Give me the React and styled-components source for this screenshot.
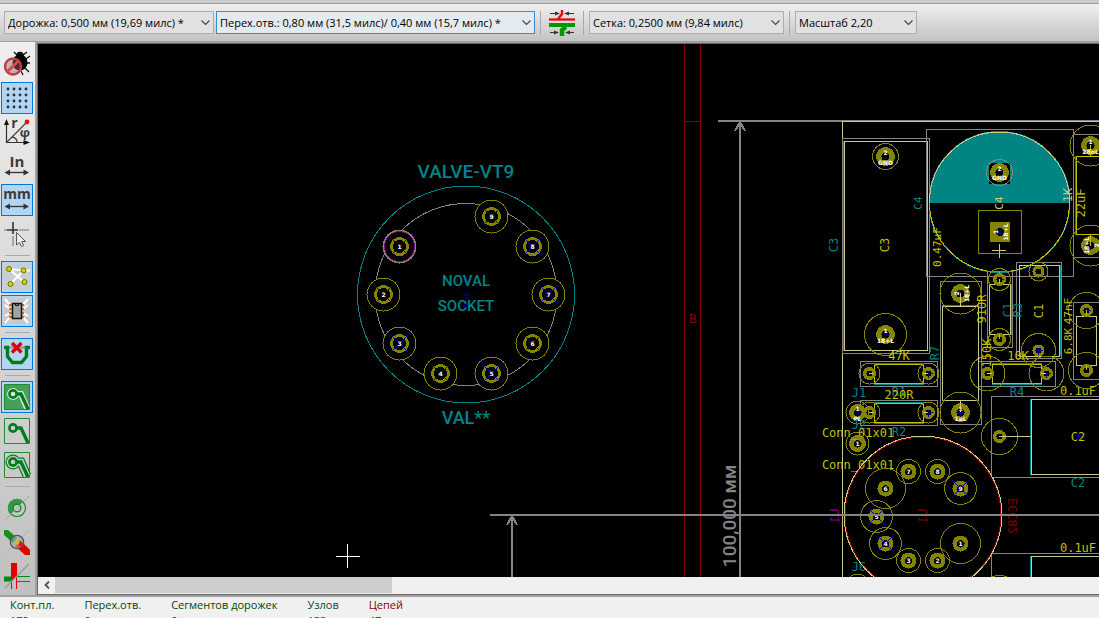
import React from 'react';
import styled, { createGlobalStyle } from 'styled-components';

const TEAL = '#008484';
const OLIVE = '#848400';
const YELLOW = '#c2c200';
const CREAM = '#c9c98a';
const GRAY = '#848484';
const RED = '#840000';
const BLUE = '#000084';
const MAGENTA = '#840084';

const GlobalStyle = createGlobalStyle`
  * {
    box-sizing: border-box;
  }
  body {
    margin: 0;
    overflow: hidden;
    background: #f0f0f0;
    color: #000;
    font-family: "Open Sans", "Noto Sans", sans-serif;
    font-size: 11px;
  }
`;

const Window = styled.div`
  display: flex;
  flex-direction: column;
  height: 100vh;
`;

const TopEdge = styled.div`
  flex: none;
  height: 4px;
  background: #cbcbcb;
  border-bottom: 1px solid #9c9c9c;
`;

const TopBar = styled.header`
  flex: none;
  display: flex;
  align-items: center;
  height: 38px;
  padding: 0 4px;
  background: linear-gradient(#f0f0f0, #c3c3c3);
  border-bottom: 1px solid #a0a0a0;
`;

const Field = styled.label`
  display: flex;
  position: relative;
  width: ${(p) => p.$width}px;
  margin-right: ${(p) => p.$gap || 0}px;
`;

const Select = styled.select`
  appearance: none;
  width: 100%;
  height: 23px;
  padding: 0 16px 0 3px;
  border: 1px solid ${(p) => (p.$active ? '#3c8ccc' : '#adadad')};
  border-radius: 0;
  background: ${(p) => (p.$active ? '#e3eaf0' : '#e1e1e1')};
  color: #000;
  font-family: inherit;
  font-size: 11px;
`;

const Chevron = styled.svg`
  position: absolute;
  right: 4px;
  top: 8px;
  width: 9px;
  height: 7px;
  pointer-events: none;
`;

const BarSeparator = styled.span`
  width: 1px;
  height: 24px;
  margin: 0 5px;
  background: #a9a9a9;
`;

const BarButton = styled.button`
  display: flex;
  align-items: center;
  justify-content: center;
  width: 32px;
  height: 32px;
  padding: 0;
  border: 0;
  background: none;
`;

const Body = styled.div`
  flex: 1;
  display: flex;
  min-height: 0;
`;

const SideBar = styled.nav`
  flex: none;
  display: flex;
  flex-direction: column;
  gap: 2px;
  width: 35px;
  padding: 6px 0 0 1px;
  background: linear-gradient(#eeeeee, #c0c0c0);
  border-bottom: 2px solid #a0a0a0;
  overflow: hidden;
`;

const ToolButton = styled.button`
  flex: none;
  display: flex;
  align-items: center;
  justify-content: center;
  width: 32px;
  height: 32px;
  padding: 0;
  border: 1px solid ${(p) => (p.$active ? '#0078d7' : 'transparent')};
  background: ${(p) => (p.$active ? '#b3d5f2' : 'none')};
`;

const SideSeparator = styled.span`
  flex: none;
  height: 1px;
  margin: 3px 5px 3px 4px;
  background: #a9a9a9;
`;

const Frame = styled.main`
  flex: 1;
  display: flex;
  flex-direction: column;
  min-width: 0;
  border-top: 1px solid #a0a0a0;
  border-left: 2px solid #a0a0a0;
  border-bottom: 2px solid #a0a0a0;
`;

const Viewport = styled.div`
  flex: 1;
  display: flex;
  flex-direction: column;
  min-height: 0;
  border: 1px solid #696969;
  border-right: 0;
`;

const Board = styled.svg`
  flex: 1;
  width: 100%;
  min-height: 0;
  background: #000;
`;

const ScrollBar = styled.div`
  flex: none;
  display: flex;
  height: 17px;
  padding-bottom: 1px;
  background: #f0f0f0;
`;

const ScrollButton = styled.button`
  display: flex;
  align-items: center;
  justify-content: center;
  width: 17px;
  height: 16px;
  padding: 0;
  border: 0;
  background: none;
`;

const Thumb = styled.div`
  width: 31.8%;
  background: #cdcdcd;
`;

const StatusBar = styled.footer`
  flex: none;
  height: 21px;
  padding: 0 10px;
  display: flex;
  gap: 30px;
  overflow: hidden;
  background: #f0f0f0;
`;

const StatusItem = styled.div`
  display: flex;
  flex-direction: column;
  color: ${(p) => p.$color};
  line-height: 16px;
  white-space: nowrap;
`;

const Icon = ({ children }) => (
  <svg width="26" height="26" viewBox="0 0 26 26" fill="none" overflow="visible" aria-hidden="true">{children}</svg>
);

const DoubleArrow = () => (
  <g fill="#333">
    <path d="M4 19.5H22" stroke="#333" strokeWidth="1.3" />
    <path d="M.5 19.5L6 16.5V22.5ZM25 19.5L19.5 16.5V22.5Z" />
  </g>
);

const IconText = styled.text`
  fill: #403838;
  font-family: "Open Sans", sans-serif;
  font-weight: 700;
  text-anchor: middle;
`;

const BugIcon = () => (
  <Icon>
    <path d="M10 1l3 3h6l4-3M22 8l4-3M23 12h3M21 17l4 4M17 20l2 4" stroke="#111" strokeWidth="1.3" />
    <circle cx="16" cy="4.5" r="3.8" fill="#111" />
    <ellipse cx="16" cy="11.5" rx="7.5" ry="8" fill="#000" />
    <circle cx="9" cy="15.5" r="8" fill="#9a6a6a" fillOpacity=".45" stroke="#c43c40" strokeWidth="2.4" />
    <path d="M3.5 20.5L14.5 10" stroke="#d8484a" strokeWidth="2.8" />
  </Icon>
);

const GridIcon = () => (
  <Icon>
    {[4, 10, 16, 22].map((y) => [4, 10, 16, 22].map((x) => (
      <circle key={`${x}-${y}`} cx={x} cy={y} r="1.4" fill="#26343f" />
    )))}
  </Icon>
);

const PolarIcon = () => (
  <Icon>
    <path d="M2.5 4V23.5H21" stroke="#333" strokeWidth="1.2" />
    <path d="M2.5 0L0 6H5ZM26 23.5L19.5 21V26Z" fill="#111" />
    <path d="M3 23L22 4M8 18q5 1 5 5" stroke="#444" strokeWidth="1.3" />
    <circle cx="23" cy="3" r="2.4" fill="#f00" />
    <IconText x="10.5" y="9" fontSize="14">r</IconText>
    <IconText x="21" y="18" fontSize="13">φ</IconText>
  </Icon>
);

const InchIcon = () => (
  <Icon>
    <IconText x="13" y="14" fontSize="15">In</IconText>
    <DoubleArrow />
  </Icon>
);

const MmIcon = () => (
  <Icon>
    <IconText x="13" y="12" fontSize="14">mm</IconText>
    <DoubleArrow />
  </Icon>
);

const CursorIcon = () => (
  <Icon>
    <path d="M9 1V13M3 9H14" stroke="#333" strokeWidth="1.6" />
    <path d="M0 9H3M15 9H25M9 15V25" stroke="#999" strokeWidth="1.6" />
    <path d="M12.5 11.5V24L15.5 21.5L17.5 25.5L19.5 24.5L17.8 20.5H21.5Z" fill="#eee" stroke="#555" />
  </Icon>
);

const RatsnestIcon = () => (
  <Icon>
    <path d="M0 0H26V26H0Z" fill="#c6ced4" />
    <path d="M5 5L20 18M19.5 6.5L6.5 20M5 5L19.5 6.5H26" stroke="#fff" strokeWidth="2" />
    <g fill="#d0d800" stroke="#6a6e00">
      <circle cx="5" cy="5" r="2.5" />
      <circle cx="19.5" cy="6.5" r="2.5" />
      <circle cx="20.5" cy="18" r="2.5" />
      <circle cx="6.5" cy="20" r="2.5" />
    </g>
  </Icon>
);

const ChipIcon = () => (
  <Icon>
    <path d="M0 0H26V26H0Z" fill="#c9c9c9" />
    <path d="M6 7L1 1M6 11L1 7M6 15L1 18M6 19L1 25M19 7L24 1M19 11L24 7M19 15L24 18M19 19L24 25" stroke="#fff" strokeWidth="2" />
    <path d="M5 7H8M5 11H8M5 15H8M5 19H8M17 7H20M17 11H20M17 15H20M17 19H20" stroke="#d06a30" strokeWidth="2" />
    <path d="M8.5 5.5H17.5V20.5H8.5Z" fill="#a2a2a2" stroke="#111" strokeWidth="1.4" />
    <path d="M11.5 5.5V7.5H14.5V5.5" stroke="#111" />
  </Icon>
);

const NoLoopIcon = () => (
  <Icon>
    <path d="M3 6.5H23" stroke="#999" strokeWidth="2.4" />
    <path d="M0 6.5H3.5V15.5L8.5 21.5H17.5L22.5 15.5V6.5H26" stroke="#007c1c" strokeWidth="3.4" />
    <path d="M8 2L17.5 11.5M17.5 2L8 11.5" stroke="#d80000" strokeWidth="3.2" />
  </Icon>
);

const ZoneIcon = ({ mode }) => (
  <Icon>
    <path d="M.5 .5H25.5V25.5H.5Z" fill={mode === 'filled' ? '#46a05a' : 'none'} stroke="#1f8c2c" />
    {mode !== 'empty' && (
      <g>
        <path d="M9 10H17L23 24" stroke={mode === 'filled' ? '#d6e8da' : '#0a7a20'} strokeWidth={mode === 'filled' ? 6 : 9} />
        <circle cx="9" cy="10" r={mode === 'filled' ? 6 : 7.5} fill={mode === 'filled' ? '#d6e8da' : '#0a7a20'} />
      </g>
    )}
    {mode === 'outline' && (
      <g>
        <path d="M9 10H17L23 24" stroke="#ccc" strokeWidth="6.5" />
        <circle cx="9" cy="10" r="6.3" fill="#ccc" />
      </g>
    )}
    <path d="M12 10H17L24 25" stroke="#007c1c" strokeWidth="3.4" />
    <circle cx="9" cy="10" r="3.6" stroke="#007c1c" strokeWidth="2.6" />
  </Icon>
);

const ViaIcon = () => (
  <Icon>
    <circle cx="13" cy="13" r="8.5" stroke="#148a28" strokeWidth="1.2" />
    <path d="M6.5 19.5A9 9 0 0 1 19.5 6.5L15.5 10.5A3.5 3.5 0 0 0 10.5 15.5Z" fill="#33964a" />
    <circle cx="13" cy="13" r="3.8" stroke="#148a28" strokeWidth="1.4" />
    <path d="M1 25L25 1" stroke="#a5a5a5" />
  </Icon>
);

const TrackIcon = () => (
  <Icon>
    <path d="M1 25L25 1" stroke="#b2b2b2" />
    <path d="M0 1H4L13 9L9 14L0 6Z" fill="#0c9418" />
    <path d="M16 11L26 21V26H21L11 17Z" fill="#e00000" />
    <circle cx="13" cy="13" r="6.6" fill="#aaa" fillOpacity=".6" stroke="#555" strokeWidth="1.4" />
    <path d="M10 15L15 11V16Z" fill="#d6c000" />
    <path d="M14 16L17 12L19 15L17 18Z" fill="#d81818" />
  </Icon>
);

const ContrastIcon = () => (
  <Icon>
    <path d="M0 13.5H7V18.5H0Z" fill="#008a14" />
    <path d="M13 13.5H26M13 18.5H26" stroke="#008a14" />
    <path d="M7 0H13V13L7 19Z" fill="#e00000" />
    <path d="M7.5 18V26M12.5 14V26" stroke="#e00000" />
    <path d="M1 25L25 1" stroke="#999" strokeWidth="1.3" />
  </Icon>
);

const ClearanceIcon = () => (
  <Icon>
    <path d="M0 9.5H26" stroke="#e80000" strokeWidth="2.2" />
    <path d="M0 15H26" stroke="#009600" strokeWidth="4" />
    <path d="M13 0V4L9 9" stroke="#e80000" strokeWidth="2.4" />
    <path d="M17 17L13 20V26" stroke="#009600" strokeWidth="4.4" />
    <path d="M1 3.5H8M18 3.5H25M1 22.5H7M19 22.5H25" stroke="#333" />
    <path d="M11 3.5L6 1.5V5.5ZM15 3.5L20 1.5V5.5ZM10 22.5L5 20.5V24.5ZM16 22.5L21 20.5V24.5Z" fill="#333" />
  </Icon>
);

const Line = styled.path`
  fill: ${(p) => p.$fill || 'none'};
  stroke: ${(p) => p.$color};
  stroke-width: ${(p) => p.$w || 1};
  shape-rendering: crispEdges;
`;

const Ring = styled.circle`
  fill: ${(p) => p.$fill || 'none'};
  stroke: ${(p) => p.$color || 'none'};
  stroke-width: ${(p) => p.$w || 1};
  shape-rendering: crispEdges;
`;

const BoardText = styled.text`
  fill: ${(p) => p.$color};
  font-family: ${(p) => (p.$wide ? 'Roboto, sans-serif' : '"DejaVu Sans Mono", monospace')};
  font-size: ${(p) => p.$size || 12}px;
  font-weight: ${(p) => (p.$wide ? 500 : 400)};
  text-anchor: middle;
`;

const PadText = styled.text`
  fill: #fff;
  font-family: "DejaVu Sans", sans-serif;
  font-size: 6px;
  font-weight: 700;
  text-anchor: middle;
`;

// Text centred on a point, turned when rot is set, flipped for the back side
const Label = ({ x, y, color, size = 12, rot, mirror, wide, children }) => (
  <g transform={`translate(${x} ${y})${rot ? ` rotate(${rot})` : ''}${mirror ? ' scale(-1 1)' : ''}`}>
    <BoardText y={Math.round(size * 0.36)} $color={color} $size={size} $wide={wide}>{children}</BoardText>
  </g>
);

const Box = ({ x, y, x2, y2, color }) => (
  <Line $color={color} d={`M${x + 0.5} ${y + 0.5}H${x2 + 0.5}V${y2 + 0.5}H${x + 0.5}Z`} />
);

const Anchor = ({ x, y }) => <Line $color={BLUE} d={`M${x - 3} ${y + 0.5}H${x + 4}M${x + 0.5} ${y - 3}V${y + 4}`} />;

const Pad = ({ x, y, clear, r = 6, hole = 3, name, net, turned, cross, anchor }) => (
  <g transform={`translate(${x + 0.5} ${y + 0.5})`}>
    <Ring r={clear} $color={OLIVE} />
    <Ring r={r} $fill={OLIVE} />
    <Ring r={hole} $fill="#000" />
    {cross && <Line $color={BLUE} d="M-9 -9L9 9M9 -9L-9 9" />}
    {anchor && <Line $color={BLUE} d="M-3 0H4M0 -3V4" />}
    <g transform={turned ? 'rotate(-90)' : undefined}>
      {name && <PadText y={net ? -2 : 2}>{name}</PadText>}
      {net && <PadText y="8">{net}</PadText>}
    </g>
  </g>
);

const socketPads = [
  [399, 246], [383, 294], [399, 343], [440, 373], [491, 373],
  [532, 343], [548, 294], [532, 246], [491, 216],
];

const tubePads = [
  [960, 543, 20], [937, 560, 12], [908, 560, 12], [885, 543, 16], [876, 516, 16],
  [885, 488, 20], [908, 471, 12], [937, 471, 12], [960, 488, 16],
];

const Socket = () => (
  <g>
    <Ring cx="466" cy="294.5" r="108.5" $color={TEAL} />
    <Ring cx="466" cy="294.5" r="91" $color={GRAY} />
    {socketPads.map(([x, y], i) => (
      <g key={i} transform={`translate(${x + 0.5} ${y + 0.5})`}>
        <Ring r="16.5" $fill="#000" $color={OLIVE} />
        {i === 0 && <Ring r="15.5" $color={GRAY} $w={2} />}
        {i === 0 && <Ring r="15" $color={MAGENTA} />}
        <Ring r="8" $color={OLIVE} $w={3} />
        <Line $color={BLUE} d="M-9 -9L9 9M9 -9L-9 9" />
        <PadText y="2">{i + 1}</PadText>
      </g>
    ))}
    <Anchor x={466} y={171} />
    <Anchor x={466} y={281} />
    <Anchor x={466} y={295} />
    <Anchor x={466} y={306} />
    <Anchor x={466} y={418} />
    <Label x={466} y={171} size={19} color={TEAL} wide>VALVE-VT9</Label>
    <Label x={466} y={281} size={15} color={TEAL} wide>NOVAL</Label>
    <Label x={466} y={306} size={15} color={TEAL} wide>SOCKET</Label>
    <Label x={466} y={418} size={18} color={TEAL} wide>VAL**</Label>
  </g>
);

const Dimensions = () => (
  <g>
    <Line $color={RED} d="M684.5 44V577M700.5 44V577M684 121.5H701" />
    <Label x={693} y={318} size={13} color={RED}>B</Label>
    <Line $color={GRAY} $w={2} d="M718 121H843M740 121V577M740 122L735 131M740 122L745 131" />
    <Line $color={GRAY} $w={2} d="M512 516V577M512 516L507 525M512 516L517 525" />
    <Label x={729} y={516} size={19} rot={-90} color={GRAY} wide>100,000 мм</Label>
    <Line $color={GRAY} d="M842 120.5H1600" />
    <Line $color={CREAM} d="M1600 121.5H842.5V577" />
  </g>
);

const Capacitors = () => (
  <g>
    <Box x={842} y={138} x2={929} y2={353} color={GRAY} />
    <Line $color={TEAL} d="M843.5 141V351" />
    <Box x={844} y={141} x2={927} y2={350} color={CREAM} />
    <Pad x={885} y={156} clear={13} r={9.5} hole={4} name="2" net="GND" />
    <Pad x={885} y={334} clear={21} r={9.5} hole={4} name="1" net="18+L" anchor />
    <Anchor x={885} y={245} />
    <Label x={885} y={245} rot={-90} color={YELLOW}>C3</Label>
    <Label x={834} y={245} rot={-90} color={TEAL}>C3</Label>

    <Box x={926} y={129} x2={1073} y2={276} color={GRAY} />
    <Line $color={TEAL} $fill={TEAL} d="M929.5 202.5A70 70 0 0 1 1069.5 202.5Z" />
    <Ring cx="999.5" cy="202" r="70.5" $color={TEAL} />
    <Line $color={CREAM} d="M929.5 202A70 70 0 0 1 1069.5 202" />
    <Line $color={YELLOW} d="M1069.5 202A70 70 0 0 1 929.5 202" />
    <Line $color="#000" $fill="#000" d="M989.5 163.5H1009.5V183.5H989.5Z" />
    <Ring cx="999.5" cy="172.5" r="13" $color={GRAY} />
    <Ring cx="999.5" cy="172.5" r="9.5" $fill={OLIVE} />
    <Ring cx="999.5" cy="172.5" r="4" $fill="#000" />
    <PadText x="999.5" y="171">2</PadText>
    <PadText x="999.5" y="180">GND</PadText>
    <Box x={978} y={210} x2={1021} y2={253} color={OLIVE} />
    <Line $color={OLIVE} $fill={OLIVE} d="M990.5 222.5H1009.5V241.5H990.5Z" />
    <Ring cx="1000" cy="232" r="4" $fill="#000" />
    <Anchor x={1000} y={232} />
    <g transform="translate(1000 232) rotate(-90)">
      <PadText y="-2">1</PadText>
      <PadText y="8">18+L</PadText>
    </g>
    <Line $color={CREAM} d="M992 250.5H1006M999.5 244V258" />
    <Label x={999} y={203} size={11} rot={-90} color={CREAM}>C4</Label>
    <Label x={918} y={203} size={11} rot={-90} color={TEAL}>C4</Label>
    <Label x={937} y={247} size={11} rot={-90} color={YELLOW}>0.47uF</Label>

    <Box x={1016} y={262} x2={1061} y2={358} color={GRAY} />
    <Line $color={TEAL} d="M1060.5 265V356" />
    <Box x={1019} y={265} x2={1059} y2={356} color={CREAM} />
    <Pad x={1038} y={271} clear={9.5} />
    <Pad x={1038} y={350} clear={17} anchor />
    <Label x={1039} y={311} rot={-90} color={YELLOW}>C1</Label>
    <Label x={1008} y={310} rot={-90} color={TEAL}>C1</Label>

    {[397, 554].map((y) => (
      <g key={y} transform={`translate(0 ${y})`}>
        <Line $color={GRAY} d="M1600 -.5H991.5V80.5H1600" />
        <Line $color={TEAL} d="M1030.5 2V78" />
        <Line $color={CREAM} d="M1600 2.5H1031.5V77.5H1600" />
        <Pad x={999} y={39} clear={18} r={6.5} />
        <Line $color={CREAM} d="M999 39.5H1031" />
        <Label x={1078} y={-6} color={YELLOW}>0.1uF</Label>
      </g>
    ))}
    <Anchor x={1078} y={436} />
    <Label x={1078} y={437} color={YELLOW}>C2</Label>
    <Label x={1078} y={483} color={TEAL}>C2</Label>
  </g>
);

const HResistor = ({ y, x, x2, clear, children }) => (
  <g>
    <Box x={x - 9} y={y - 12} x2={x2 + 9} y2={y + 13} color={GRAY} />
    <Line $color={TEAL} d={`M${x + 5} ${y - 10}.5H${x2 - 4}M${x + 5} ${y + 11}.5H${x2 - 4}`} />
    <Box x={x + 5} y={y - 9} x2={x2 - 5} y2={y + 10} color={YELLOW} />
    <Pad x={x} y={y} clear={clear} r={6.5} />
    <Pad x={x2} y={y} clear={clear} r={6.5} anchor />
    <Line $color={CREAM} d={`M${x} ${y}.5H${x + 5}M${x2 - 5} ${y}.5H${x2}`} />
    {children}
  </g>
);

const Resistors = () => (
  <g>
    <HResistor x={869} x2={928} y={373} clear={10.5}>
      <Label x={899} y={356} color={YELLOW}>47K</Label>
      <Label x={899} y={392} color={TEAL}>R1</Label>
    </HResistor>
    <HResistor x={869} x2={928} y={412} clear={10.5}>
      <Label x={899} y={395} color={YELLOW}>220R</Label>
      <Label x={899} y={432} color={TEAL}>R2</Label>
    </HResistor>
    <HResistor x={987} x2={1046} y={373} clear={17.5}>
      <Label x={1018} y={356} color={YELLOW}>10K</Label>
      <Label x={1017} y={392} color={TEAL}>R4</Label>
    </HResistor>

    <Box x={940} y={281} x2={981} y2={424} color={GRAY} />
    <Line $color={TEAL} d="M942 305.5H979" />
    <Box x={942} y={306} x2={978} y2={400} color={CREAM} />
    <Pad x={960} y={293} clear={20.5} r={9.5} hole={4} name="2" net="18+L" turned />
    <Pad x={960} y={412} clear={20.5} r={9.5} hole={4} name="1" net="1aL" anchor />
    <Line $color={CREAM} d="M960.5 293V306M960.5 400V412" />
    <Label x={935} y={353} rot={-90} color={TEAL}>R7</Label>

    <Box x={987} y={271} x2={1012} y2={347} color={GRAY} />
    <Line $color={TEAL} d="M1011.5 284V335" />
    <Box x={989} y={284} x2={1010} y2={334} color={CREAM} />
    <Pad x={999} y={279} clear={11} r={6.5} anchor />
    <Pad x={999} y={339} clear={11} r={6.5} />
    <Line $color={YELLOW} d="M999.5 279V284M999.5 334V339" />
    <Label x={982} y={309} rot={-90} color={YELLOW}>910R</Label>
    <Label x={987} y={353} rot={-90} color={YELLOW}>150K</Label>
    <Label x={1018} y={310} rot={-90} color={TEAL}>R3</Label>

    <Line $color={GRAY} d="M1600 134.5H1073.5V257.5H1600M1600 302.5H1073.5V379.5H1600" />
    <Line $color={TEAL} d="M1075.5 156V235" />
    <Line $color={YELLOW} d="M1600 156.5H1076.5V234.5H1600" />
    <Pad x={1090} y={145} clear={20.5} r={9.5} hole={4} name="1" net="28nL" anchor />
    <Pad x={1090} y={245} clear={20.5} r={9.5} hole={4} name="18+L" net="2" turned anchor />
    <Line $color={YELLOW} d="M1090.5 145V156M1090.5 235V246" />
    <Label x={1068} y={195} rot={-90} color={CREAM}>1K</Label>
    <Label x={1081} y={203} rot={-90} color={YELLOW}>22uF</Label>

    <Box x={1076} y={316} x2={1096} y2={365} color={CREAM} />
    <Pad x={1086} y={310} clear={18} r={6.5} anchor />
    <Pad x={1086} y={370} clear={18} r={6.5} />
    <Line $color={YELLOW} d="M1086.5 310V316M1086.5 365V370" />
    <Label x={1068} y={311} size={11} rot={-90} color={YELLOW}>47nF</Label>
    <Label x={1068} y={341} size={11} rot={-90} color={YELLOW}>6.8K</Label>
  </g>
);

const Tube = () => (
  <g>
    <Ring cx="923" cy="515" r="79" $color={CREAM} />
    <Ring cx="923" cy="515" r="78" $color={RED} />
    {tubePads.map(([x, y, clear], i) => (
      <Pad key={i} x={x} y={y} clear={clear} r={8} hole={3.5} name={i + 1} cross={clear === 16} anchor={i === 0} />
    ))}
    <Label x={835} y={516} rot={-90} mirror color={MAGENTA}>U1</Label>
    <Label x={923} y={516} rot={-90} mirror color={RED}>U1</Label>
    <Label x={1013} y={516} rot={-90} mirror color={RED}>ECC82</Label>
  </g>
);

const Connectors = () => (
  <g>
    <Pad x={857} y={412} clear={11.5} r={8.5} hole={3.5} name="1" net="PL" anchor />
    <Pad x={857} y={443} clear={11.5} r={8.5} hole={3.5} name="1" anchor />
    <Pad x={857} y={585} clear={11.5} r={8.5} />
    <Label x={859} y={393} color={TEAL}>J1</Label>
    <Label x={859} y={425} color={TEAL}>J2</Label>
    <Label x={859} y={567} color={TEAL}>J6</Label>
    <Label x={858} y={433} color={YELLOW}>Conn_01x01</Label>
    <Label x={858} y={465} color={YELLOW}>Conn_01x01</Label>
  </g>
);

const Combo = ({ label, value, width, gap, active }) => (
  <Field $width={width} $gap={gap}>
    <Select aria-label={label} $active={active} defaultValue={value}>
      <option>{value}</option>
    </Select>
    <Chevron viewBox="0 0 9 7" fill="none" stroke="#444" strokeWidth="1.1"><path d="M.5 1.5L4.5 5.5L8.5 1.5" /></Chevron>
  </Field>
);

const tools = [
  { name: 'DRC', icon: <BugIcon /> },
  { name: 'Grid', icon: <GridIcon />, active: true },
  { name: 'Polar coordinates', icon: <PolarIcon /> },
  { name: 'Inches', icon: <InchIcon /> },
  { name: 'Millimetres', icon: <MmIcon />, active: true },
  { name: 'Cursor shape', icon: <CursorIcon /> },
  null,
  { name: 'Ratsnest', icon: <RatsnestIcon />, active: true },
  { name: 'Module ratsnest', icon: <ChipIcon />, active: true },
  null,
  { name: 'Delete loops', icon: <NoLoopIcon />, active: true },
  null,
  { name: 'Filled zones', icon: <ZoneIcon mode="filled" />, active: true },
  { name: 'Hidden zones', icon: <ZoneIcon mode="empty" /> },
  { name: 'Zone outlines', icon: <ZoneIcon mode="outline" /> },
  null,
  { name: 'Vias outline', icon: <ViaIcon /> },
  { name: 'Tracks outline', icon: <TrackIcon /> },
  { name: 'High contrast', icon: <ContrastIcon /> },
];

const stats = [
  ['Конт.пл.', '179', '#004800'],
  ['Перех.отв.', '0', '#004800'],
  ['Сегментов дорожек', '0', '#004800'],
  ['Узлов', '153', '#004848'],
  ['Цепей', '47', '#840000'],
];

export default function App() {
  return (
    <Window>
      <GlobalStyle />
      <TopEdge />
      <TopBar>
        <Combo label="Дорожка" value="Дорожка: 0,500 мм (19,69 милс) *" width={210} gap={2} />
        <Combo label="Перех.отв." value="Перех.отв.: 0,80 мм (31,5 милс)/ 0,40 мм (15,7 милс) *" width={319} active />
        <BarSeparator />
        <BarButton aria-label="Clearance"><ClearanceIcon /></BarButton>
        <BarSeparator />
        <Combo label="Сетка" value="Сетка: 0,2500 мм (9,84 милс)" width={195} />
        <BarSeparator />
        <Combo label="Масштаб" value="Масштаб 2,20" width={122} />
      </TopBar>
      <Body>
        <SideBar>
          {tools.map((tool, key) => (tool
            ? <ToolButton key={key} aria-label={tool.name} $active={tool.active}>{tool.icon}</ToolButton>
            : <SideSeparator key={key} />
          ))}
        </SideBar>
        <Frame>
          <Viewport>
            <Board>
              <g transform="translate(-38 -44)">
                <Dimensions />
                <Socket />
                <Capacitors />
                <Resistors />
                <Connectors />
                <Tube />
                <Line $color={GRAY} $w={2} d="M490 515H1600" />
                <Line $color="#fff" d="M336 556.5H360M347.5 544V568" />
              </g>
            </Board>
            <ScrollBar>
              <ScrollButton aria-label="Scroll left">
                <svg width="8" height="8" viewBox="0 0 8 8" fill="none" stroke="#505050" strokeWidth="1.8"><path d="M6 .5L2.5 4L6 7.5" /></svg>
              </ScrollButton>
              <Thumb />
            </ScrollBar>
          </Viewport>
        </Frame>
      </Body>
      <StatusBar>
        {stats.map(([name, value, color]) => (
          <StatusItem key={name} $color={color}>
            <span>{name}</span>
            <span>{value}</span>
          </StatusItem>
        ))}
      </StatusBar>
    </Window>
  );
}
